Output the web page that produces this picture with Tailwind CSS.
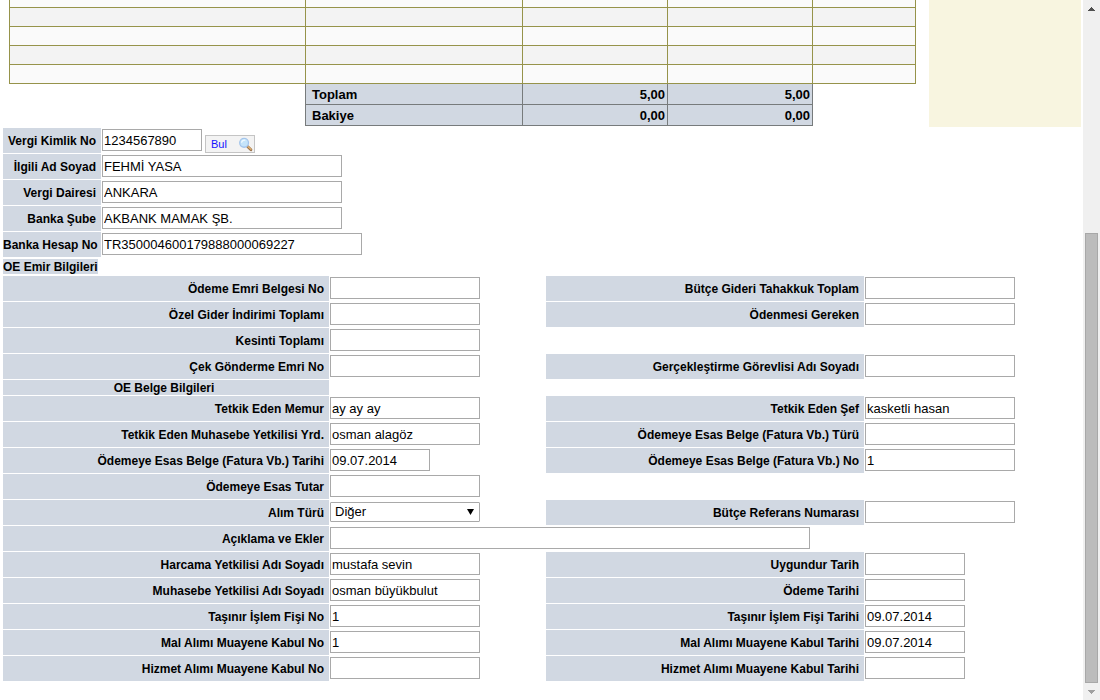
<!DOCTYPE html>
<html lang="tr">
<head>
<meta charset="utf-8">
<meta name="viewport" content="width=device-width, initial-scale=1">
<title>Ödeme Emri</title>
<script src="https://cdn.jsdelivr.net/npm/@tailwindcss/browser@4"></script>
</head>
<body class="flex min-h-screen bg-white font-['Liberation_Sans',Arial,sans-serif] text-black">
<main class="min-w-0 flex-1 pr-[2px]">
  <div class="flex">
    <div class="min-w-0 flex-1 pr-[13px] pl-[9px]">
      <table class="w-full table-fixed border-separate border-spacing-0 text-[13px] leading-5 [&_td]:border-r [&_td]:border-b [&_td]:p-0 [&_th]:border-r [&_th]:border-b [&_th]:p-0">
        <colgroup><col><col class="w-[217px]"><col class="w-[145px]"><col class="w-[145px]"><col class="w-[103px]"></colgroup>
        <tbody class="[&_td]:border-[#96934a] [&_td:first-child]:border-l [&_tr]:h-[19px] [&_tr:nth-child(even)]:bg-[#f3f3f3] [&_tr:nth-child(odd)]:bg-[#fafafa] [&_tr:first-child]:h-2">
          <tr><td></td><td></td><td></td><td></td><td></td></tr>
          <tr><td></td><td></td><td></td><td></td><td></td></tr>
          <tr><td></td><td></td><td></td><td></td><td></td></tr>
          <tr><td></td><td></td><td></td><td></td><td></td></tr>
          <tr><td></td><td></td><td></td><td></td><td></td></tr>
        </tbody>
        <tfoot class="font-bold leading-[18px] [&_td]:border-[#777b7c] [&_td]:bg-[#d1d8e2] [&_td]:pt-[2px] [&_td]:pr-[2px] [&_td]:text-right [&_th]:border-[#777b7c] [&_th]:bg-[#d1d8e2] [&_th]:pt-[2px] [&_th]:pl-1.5 [&_th]:text-left [&_td:first-child]:border-b-0 [&_td:first-child]:bg-white">
          <tr><td></td><th scope="row">Toplam</th><td>5,00</td><td>5,00</td></tr>
          <tr><td></td><th scope="row">Bakiye</th><td>0,00</td><td>0,00</td></tr>
        </tfoot>
      </table>
    </div>
    <aside class="mb-[-1px] w-[152px] bg-[#f8f5e0]"></aside>
  </div>

  <form class="pt-[2px] pl-[3px] text-[12px] [&_h2]:pt-px [&_h2]:leading-[14px] [&_input]:h-[22px] [&_input]:max-w-full [&_input]:border [&_input]:border-[#a9a9a9] [&_input]:bg-white [&_input]:px-px [&_input]:text-[13px] [&_input]:leading-5 [&_label]:bg-[#d1d8e2] [&_label]:pt-[2px] [&_label]:text-right [&_label]:font-bold [&_label]:leading-[23px] [&_label]:whitespace-nowrap">
    <!-- Vergi ve banka bilgileri -->
    <div class="grid grid-cols-[98px_1fr] items-start gap-px [&_input]:mt-px [&_input]:w-60 [&_label]:pr-[5px]">
      <label for="vkn">Vergi Kimlik No</label>
      <div class="flex h-[25px] gap-[3px]"><input id="vkn" class="!w-[100px]" value="1234567890"><button type="button" class="mt-[7px] flex h-[18px] w-[50px] items-center justify-between border border-[#c4c4c4] bg-[#f3f3f3] pr-px pl-[5px] text-[11px] text-[#1414ff]">Bul
        <svg class="size-[15px]" viewBox="0 0 16 16" aria-hidden="true"><path d="M10.2 10.2l3.6 3.4" stroke="#9b7148" stroke-width="3" stroke-linecap="round"/><path d="M10.8 10.3l3 2.8" stroke="#dfb273" stroke-width="1.4" stroke-linecap="round"/><circle cx="6.5" cy="6.2" r="4.7" fill="#c5e4fa" stroke="#a4c5eb" stroke-width="1.4"/><path d="M3.8 6.2a3 3 0 0 1 4-2.7" fill="none" stroke="#effaff" stroke-width="1.4"/></svg></button></div>
      <label for="ad">İlgili Ad Soyad</label><input id="ad" value="FEHMİ YASA">
      <label for="daire">Vergi Dairesi</label><input id="daire" value="ANKARA">
      <label for="sube">Banka Şube</label><input id="sube" value="AKBANK MAMAK ŞB.">
      <label for="hesap">Banka Hesap No</label><input id="hesap" class="!w-[260px]" value="TR350004600179888000069227">
    </div>
    <h2 class="mt-[2px] w-[95px] bg-[#d1d8e2] font-bold whitespace-nowrap">OE Emir Bilgileri</h2>

    <!-- Ödeme emri ve belge bilgileri -->
    <div class="mt-[2px] grid grid-cols-[minmax(0,326fr)_minmax(0,215fr)_minmax(0,318fr)_minmax(0,216fr)] items-start gap-px [&_input]:mt-px [&_input]:w-[150px] [&_label]:pr-[5px]">
      <label for="f1">Ödeme Emri Belgesi No</label><input id="f1">
      <label for="g1">Bütçe Gideri Tahakkuk Toplam</label><input id="g1">
      <label for="f2">Özel Gider İndirimi Toplamı</label><input id="f2">
      <label for="g2">Ödenmesi Gereken</label><input id="g2">
      <label for="f3">Kesinti Toplamı</label><input id="f3" class="col-span-3">
      <label for="f4">Çek Gönderme Emri No</label><input id="f4">
      <label for="g4">Gerçekleştirme Görevlisi Adı Soyadı</label><input id="g4">
      <div class="col-span-4 grid grid-cols-[minmax(0,326fr)_minmax(0,752fr)]"><h2 class="bg-[#d1d8e2] pr-1 text-center font-bold">OE Belge Bilgileri</h2></div>
      <label for="f5">Tetkik Eden Memur</label><input id="f5" value="ay ay ay">
      <label for="g5">Tetkik Eden Şef</label><input id="g5" value="kasketli hasan">
      <label for="f6">Tetkik Eden Muhasebe Yetkilisi Yrd.</label><input id="f6" value="osman alagöz">
      <label for="g6">Ödemeye Esas Belge (Fatura Vb.) Türü</label><input id="g6">
      <label for="f7">Ödemeye Esas Belge (Fatura Vb.) Tarihi</label><input id="f7" class="!w-[100px]" value="09.07.2014">
      <label for="g7">Ödemeye Esas Belge (Fatura Vb.) No</label><input id="g7" value="1">
      <label for="f8">Ödemeye Esas Tutar</label><input id="f8" class="col-span-3">
      <label for="f9">Alım Türü</label>
      <div class="relative mt-[2px] h-5 w-[150px]"><select id="f9" class="h-5 w-full appearance-none rounded-[1px] border border-[#a9a9a9] bg-white pl-1 text-[13px] leading-[18px]"><option>Diğer</option></select><svg class="pointer-events-none absolute top-[7px] right-1.5 h-1.5 w-[7px]" viewBox="0 0 7 6" aria-hidden="true"><path d="M0 0h7L3.5 6z"/></svg></div>
      <label for="g9">Bütçe Referans Numarası</label><input id="g9">
      <label for="f10">Açıklama ve Ekler</label><input id="f10" class="col-span-3 !w-[480px]">
      <label for="f11">Harcama Yetkilisi Adı Soyadı</label><input id="f11" value="mustafa sevin">
      <label for="g11">Uygundur Tarih</label><input id="g11" class="!w-[100px]">
      <label for="f12">Muhasebe Yetkilisi Adı Soyadı</label><input id="f12" value="osman büyükbulut">
      <label for="g12">Ödeme Tarihi</label><input id="g12" class="!w-[100px]">
      <label for="f13">Taşınır İşlem Fişi No</label><input id="f13" value="1">
      <label for="g13">Taşınır İşlem Fişi Tarihi</label><input id="g13" class="!w-[100px]" value="09.07.2014">
      <label for="f14">Mal Alımı Muayene Kabul No</label><input id="f14" value="1">
      <label for="g14">Mal Alımı Muayene Kabul Tarihi</label><input id="g14" class="!w-[100px]" value="09.07.2014">
      <label for="f15">Hizmet Alımı Muayene Kabul No</label><input id="f15">
      <label for="g15">Hizmet Alımı Muayene Kabul Tarihi</label><input id="g15" class="!w-[100px]">
    </div>
  </form>
</main>

<!-- Kaydırma çubuğu -->
<div class="flex w-[17px] shrink-0 flex-col bg-[#f0f0f0]">
  <button type="button" aria-label="Yukarı" class="flex h-[17px] items-center justify-center"><svg class="h-1 w-[7px]" viewBox="0 0 7 4" shape-rendering="crispEdges" aria-hidden="true"><path d="M3 0h1v1h1v1h1v1h1v1H0V3h1V2h1V1h1z" fill="#505050"/></svg></button>
  <div class="flex-[216]"></div>
  <div class="mr-[2px] ml-[2px] box-content flex-[448] border border-[#a8a8a8] bg-[#bcbcbc]"></div>
  <button type="button" aria-label="Aşağı" class="flex h-[17px] items-center justify-center"><svg class="h-1 w-[7px]" viewBox="0 0 7 4" shape-rendering="crispEdges" aria-hidden="true"><path d="M0 0h7v1H6v1H5v1H4v1H3V3H2V2H1V1H0z" fill="#a0a0a0"/></svg></button>
</div>
</body>
</html>
